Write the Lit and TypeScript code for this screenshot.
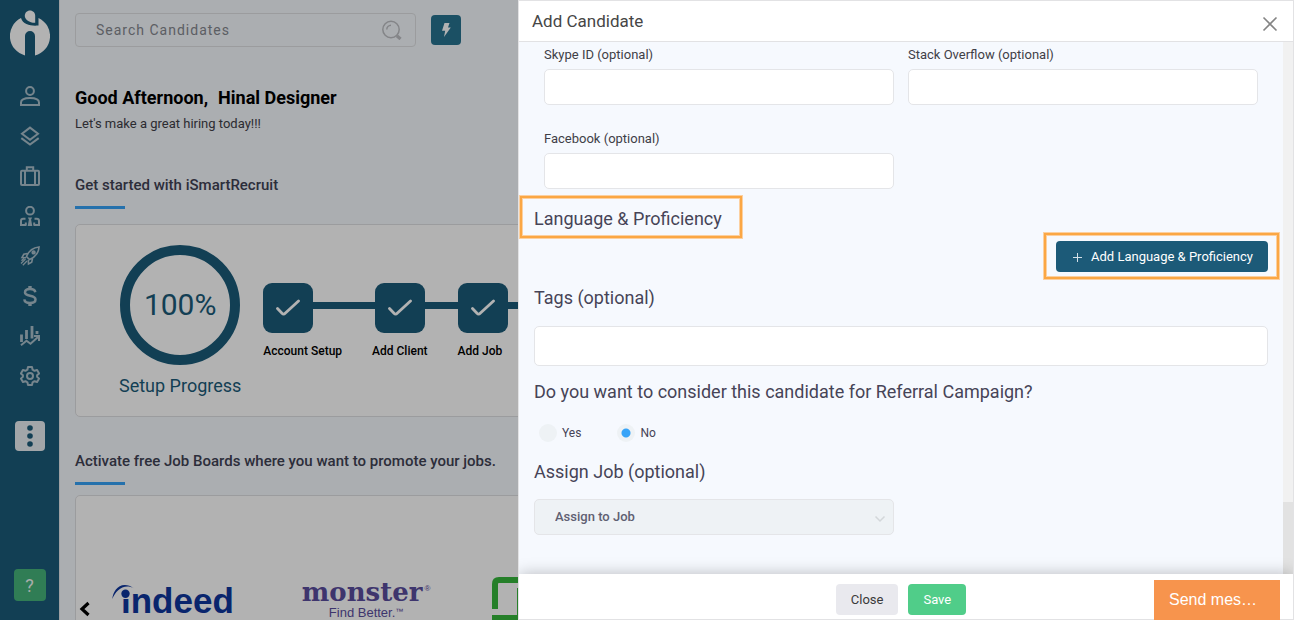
import { LitElement, html, svg, css } from "lit";
import { customElement, state } from "lit/decorators.js";

const navIcons = [
  {
    label: "Candidates",
    art: svg`<circle cx="10" cy="5" r="3.9"/><path d="M1 19v-2.600C1 13.200 5.500 11.900 10 11.900s9 1.300 9 4.500V19z"/>`,
  },
  {
    label: "Pipeline",
    art: svg`<path d="M10 1.600 18 7.700 10 13.800 2 7.700z"/><path d="M1.300 12.100 10 18.600l8.700-6.500"/>`,
  },
  {
    label: "Jobs",
    art: svg`<rect x="1" y="4.800" width="18" height="14.200" rx="1"/><path d="M6.800 4.500V1.200h6.400v3.300M5 5v14M15 5v14"/>`,
  },
  {
    label: "Clients",
    art: svg`<circle cx="10" cy="4.700" r="3.900"/><path d="M5.500 12.800H3.200Q1 12.800 1 15V19h5.500M14.500 12.800h2.300q2.200 0 2.200 2.200V19h-5.500M5.800 16.500V19M14.200 16.500V19"/><path class="solid" d="M7.800 11.500h4.400l-1.100 2 1.200 6.500H7.700l1.200-6.500z"/>`,
  },
  {
    label: "Campaigns",
    art: svg`<path d="M6.500 10.500C9 4.500 13.500 1.500 19 1c-.400 5.500-3.500 10-9.500 12.500zM7.500 7.500 3.800 8.300 2 11.500l4 .2M12.500 12.500l-.8 3.700L8.500 18l-.2-4" stroke-width="1.600"/><circle cx="13.600" cy="6.400" r="1.200"/><path d="M5.500 13 1 17.500M7 15l-4.200 4.200M4 12.300 1.500 14.800" stroke-width="1.300"/>`,
  },
  {
    label: "Billing",
    art: svg`<path d="M15.300 6.200C15 4.200 13 3.100 10 3.100c-3 0-5 1.200-5 3.400C5 11 15.500 8.400 15.500 13.400c0 2.300-2.200 3.500-5.500 3.500-3.400 0-5.400-1.200-5.700-3.600" stroke-width="2.500"/><path class="solid" d="M8.300 0h3.400v3H8.300zM8.300 17h3.400v3H8.300z"/>`,
  },
  {
    label: "Reports",
    art: svg`<path d="M1.500 8.500V16M6.500 4v9M12 0v12.500M17 5V8" stroke-width="2.800"/><path d="M1 19.200 6.500 14.800l4 3 7.500-6.700M14 10h5v5" stroke-width="2"/>`,
  },
  {
    label: "Settings",
    art: svg`<path d="M8 1h4l.6 2.700 1.900 1.100 2.600-.8 2 3.400-2 1.900v1.400l2 1.900-2 3.400-2.600-.8-1.900 1.100L12 19H8l-.6-2.700-1.900-1.100-2.600.8-2-3.400 2-1.900V9.300l-2-1.900 2-3.400 2.600.8 1.900-1.100z" stroke-linejoin="round"/><circle cx="10" cy="10" r="3"/>`,
  },
];

const steps = ["Account Setup", "Add Client", "Add Job"];

@customElement("side-nav")
class SideNav extends LitElement {
  static styles = css`
    :host {
      display: flex;
      flex-direction: column;
      align-items: center;
      box-sizing: border-box;
      width: 60px;
      padding: 10px 0 19px;
      background: #1b5b79;
      border-right: 1px solid #e3e6e9;
    }
    .logo { display: block; width: 40px; height: 46px; fill: #fff; }
    .items {
      display: flex;
      flex-direction: column;
      gap: 20px;
      list-style: none;
      margin: 30px 0 0;
      padding: 0;
    }
    .item { display: block; width: 20px; height: 20px; color: #a9bfca; }
    .icon {
      display: block;
      width: 20px;
      height: 20px;
      fill: none;
      stroke: currentColor;
      stroke-width: 2;
    }
    .solid { fill: currentColor; stroke: none; }
    .square {
      display: grid;
      place-items: center;
      padding: 0;
      border: 0;
      border-radius: 4px;
      cursor: pointer;
    }
    .more { width: 30px; height: 30px; margin-top: 35px; background: #e9eef2; }
    .dots { width: 6px; height: 22px; fill: #1b5b79; }
    .help {
      width: 32px;
      height: 32px;
      margin-top: auto;
      background: #45b47a;
      color: #f2f7f5;
      font: 18px Roboto, sans-serif;
    }
  `;

  render() {
    return html`
      <svg class="logo" viewBox="0 0 40 46" role="img" aria-label="iSmartRecruit">
        <path d="M11 8.100A20 20 0 0 0 15 45.400V26a5 5 0 0 1 10 0v19.400A20 20 0 0 0 28.500 7.900V15.500C22 16 13 15.500 11 8.100z"/>
        <path d="M20 .5c3 0 5.200 2.300 5.200 5.200v7C20 13 14.800 9.800 14.800 5.700 14.800 2.800 17 .5 20 .5z"/>
      </svg>
      <ul class="items">
        ${navIcons.map(
          (n) => html`<li>
            <a class="item" href="#" aria-label=${n.label}>
              <svg class="icon" viewBox="0 0 20 20">${n.art}</svg>
            </a>
          </li>`
        )}
      </ul>
      <button class="square more" aria-label="More">
        <svg class="dots" viewBox="0 0 6 22">
          <circle cx="3" cy="3" r="2.800"/><circle cx="3" cy="11" r="2.800"/><circle cx="3" cy="19" r="2.800"/>
        </svg>
      </button>
      <button class="square help" aria-label="Help">?</button>
    `;
  }
}

@customElement("dashboard-view")
class DashboardView extends LitElement {
  static styles = css`
    :host {
      display: block;
      box-sizing: border-box;
      min-width: 0;
      padding: 13px 15px 0;
      background: #f5f9fe;
      overflow: hidden;
    }
    .topbar { display: flex; align-items: center; gap: 15px; height: 34px; }
    .search {
      display: flex;
      align-items: center;
      box-sizing: border-box;
      width: 341px;
      height: 34px;
      padding: 0 13px 0 20px;
      border: 1px solid #dfe0e2;
      border-radius: 4px;
    }
    .search-input {
      flex: 1;
      min-width: 0;
      padding: 0;
      border: 0;
      outline: 0;
      background: none;
      font: 14px Roboto, sans-serif;
      letter-spacing: 1px;
    }
    .search-input::placeholder { color: #85888f; opacity: 1; }
    .lens { width: 20px; height: 20px; fill: none; stroke: #bdbfc3; stroke-width: 1.500; }
    .quick {
      display: grid;
      place-items: center;
      width: 30px;
      height: 30px;
      padding: 0;
      border: 0;
      border-radius: 4px;
      background: #287390;
    }
    .bolt { width: 10px; height: 14px; fill: #fff; }
    .greeting {
      display: flex;
      gap: 10px;
      margin: 39px 0 0;
      font-size: 18px;
      font-weight: 700;
      line-height: 24px;
      color: #000;
    }
    .lead { margin: 4px 0 0; font-size: 13px; line-height: 20px; color: #3f4047; }
    .title {
      margin: 0;
      padding-bottom: 14px;
      font-size: 15px;
      font-weight: 500;
      line-height: 20px;
      color: #3f4254;
      background: linear-gradient(#36a3f7, #36a3f7) 0 100% / 50px 3px no-repeat;
    }
    .title-start { margin-top: 41px; }
    .title-boards { margin-top: 34px; }
    .card {
      box-sizing: border-box;
      border: 1px solid #dfe0e2;
      border-radius: 5px;
      background: #fff;
    }
    .setup {
      display: flex;
      align-items: flex-start;
      margin-top: 15px;
      padding: 20px 0 18px 43px;
    }
    .progress { text-align: center; color: #1b5b79; }
    .ring {
      display: grid;
      place-items: center;
      box-sizing: border-box;
      width: 120px;
      height: 120px;
      margin: 0 auto;
      border: 10px solid #1b5b79;
      border-radius: 50%;
      font-size: 30px;
      line-height: 36px;
    }
    .caption { margin: 9px 0 0; font-size: 18px; line-height: 24px; }
    .steps {
      display: flex;
      flex: 1;
      gap: 30px;
      list-style: none;
      margin: 38px 0 0 22px;
      padding: 0;
      background: linear-gradient(#1b5b79, #1b5b79) 0 19px / 100% 7px no-repeat;
    }
    .step { display: flex; flex-direction: column; white-space: nowrap; }
    .step:nth-child(2) { align-items: center; }
    .badge {
      display: grid;
      place-items: center;
      width: 50px;
      height: 50px;
      border-radius: 9px;
      background: #1b5b79;
    }
    .check { width: 24px; height: 18px; fill: none; stroke: #fff; stroke-width: 2.800; }
    .step-name { margin-top: 10px; font-size: 12px; font-weight: 500; line-height: 16px; color: #000; }
    .boards {
      display: flex;
      align-items: flex-start;
      margin-top: 10px;
      height: 200px;
      padding: 80px 0 0 3px;
    }
    .prev { width: 12px; height: 16px; margin-top: 25px; padding: 0; border: 0; background: none; }
    .prev-icon { display: block; width: 12px; height: 16px; fill: none; stroke: #000; stroke-width: 3.200; }
    .indeed {
      position: relative;
      margin: 6px 0 0 30px;
      color: #0e369d;
      font: bold 35px/38px "Liberation Sans", sans-serif;
    }
    .swoosh { position: absolute; left: -9px; top: 0; width: 26px; height: 18px; fill: #0e369d; overflow: visible; }
    .gap { fill: #fff; }
    .monster { margin: 3px 0 0 68px; color: #5a4d9d; text-align: center; }
    .monster-name { font: bold 26px/27px "DejaVu Serif", serif; }
    .reg { font: 8px "Liberation Sans", sans-serif; vertical-align: 10px; margin-left: 2px; }
    .monster-tag { font: 13px/14px "Liberation Sans", sans-serif; }
    .tm { font-size: 8px; line-height: 8px; vertical-align: 3px; }
    .frame { width: 60px; height: 60px; margin-left: 62px; fill: none; stroke: #35b73c; stroke-width: 6; }
  `;

  render() {
    return html`
      <div class="topbar">
        <label class="search">
          <input class="search-input" type="search" placeholder="Search Candidates" aria-label="Search Candidates" />
          <svg class="lens" viewBox="0 0 20 20">
            <circle cx="9" cy="9.500" r="8.200"/><path d="M4.800 9.500A4.300 4.300 0 0 1 9 5.200"/>
            <path d="M14.800 15.700l3.700 3.300" stroke-width="3.200"/>
          </svg>
        </label>
        <button class="quick" aria-label="Quick actions">
          <svg class="bolt" viewBox="0 0 10 14"><path d="M3.500 0h5L7 4.400h2.800L3 14l1.200-6.200H1z"/></svg>
        </button>
      </div>
      <h1 class="greeting"><span>Good Afternoon,</span><span>Hinal Designer</span></h1>
      <p class="lead">Let's make a great hiring today!!!</p>
      <h2 class="title title-start">Get started with iSmartRecruit</h2>
      <section class="card setup">
        <div class="progress">
          <div class="ring">100%</div>
          <p class="caption">Setup Progress</p>
        </div>
        <ol class="steps">
          ${steps.map(
            (s) => html`<li class="step">
              <span class="badge">
                <svg class="check" viewBox="0 0 24 18"><path d="M1.500 9.500 6 14.300q1.600 1.600 3.200 0L22.500 2" stroke-linecap="round"/></svg>
              </span>
              <span class="step-name">${s}</span>
            </li>`
          )}
        </ol>
      </section>
      <h2 class="title title-boards">Activate free Job Boards where you want to promote your jobs.</h2>
      <section class="card boards">
        <button class="prev" aria-label="Previous">
          <svg class="prev-icon" viewBox="0 0 12 16"><path d="M9.500 2 3 8l6.500 6"/></svg>
        </button>
        <div class="indeed">
          indeed
          <svg class="swoosh" viewBox="0 0 26 18">
            <path class="gap" d="M8 4h11v13H8z"/>
            <path d="M.3 17C1 8 9-2.500 22.500 6.500 12 1 4 8 .3 17z"/>
            <circle cx="13.500" cy="11.800" r="4.200"/>
          </svg>
        </div>
        <div class="monster">
          <div class="monster-name">monster<span class="reg">®</span></div>
          <div class="monster-tag">Find Better.<span class="tm">™</span></div>
        </div>
        <svg class="frame" viewBox="0 0 60 60"><path d="M3 33V8q0-4 4-4h50M0 42h60M28 42V12"/></svg>
      </section>
    `;
  }
}

@customElement("candidate-drawer")
class CandidateDrawer extends LitElement {
  @state() referral = "No";

  static styles = css`
    :host {
      display: flex;
      flex-direction: column;
      box-sizing: border-box;
      isolation: isolate;
      background: #fff;
      border: 1px solid #e2e2e4;
      color: #3f4047;
    }
    .head {
      display: flex;
      align-items: center;
      justify-content: space-between;
      height: 40px;
      padding: 0 15px 0 13px;
      border-bottom: 1px solid #e2e2e4;
    }
    .name { margin: 0; font-size: 17px; font-weight: 400; line-height: 24px; color: #464646; }
    .close-icon { display: grid; padding: 0; border: 0; background: none; margin-top: 6px; }
    .cross { width: 16px; height: 16px; fill: none; stroke: #848484; stroke-width: 1.600; }
    .body { display: flex; flex: 1; min-height: 0; background: #f6f9fe; }
    .form { flex: 1; min-width: 0; padding: 3px 15px 0; overflow: hidden; }
    .fields {
      display: grid;
      grid-template-columns: 1fr 1fr;
      gap: 24px 14px;
      padding: 0 10px;
    }
    .field { display: flex; flex-direction: column; gap: 4px; }
    .label { font-size: 13px; line-height: 20px; }
    .input {
      box-sizing: border-box;
      width: 100%;
      height: 36px;
      padding: 0 12px;
      border: 1px solid #e4e5e8;
      border-radius: 5px;
      background: #fff;
      font: 13px Roboto, sans-serif;
    }
    .tall { display: block; height: 40px; margin-top: 16px; }
    .heading { margin: 0; font-size: 18px; font-weight: 400; line-height: 24px; color: #464457; }
    .language { margin-top: 18px; }
    .spaced { display: block; margin-top: 14px; }
    .marked { position: relative; display: inline-block; }
    .marker {
      position: absolute;
      border: 2px solid #fba744;
      box-shadow: 0 0 0 1px #fcd0a0, inset 0 0 0 1px #fcd0a0;
      pointer-events: none;
    }
    .marker-heading { inset: -11px -20px -7px -14px; }
    .marker-button { inset: -8px -11px -7px -12px; }
    .actions { display: flex; justify-content: flex-end; margin-top: 10px; }
    .btn {
      display: inline-flex;
      align-items: center;
      height: 31px;
      padding: 0 15px;
      border: 0;
      border-radius: 4px;
      font: 13px Roboto, sans-serif;
      cursor: pointer;
    }
    .add { gap: 8px; background: #1c5a78; color: #fff; }
    .plus { width: 12px; height: 12px; fill: none; stroke: #d4e0e7; stroke-width: 1; }
    .radios {
      display: flex;
      gap: 36px;
      margin: 20px 0 18px;
      padding: 0 0 0 5px;
      border: 0;
    }
    .radio { display: flex; align-items: center; gap: 5px; font-size: 12px; line-height: 18px; color: #464457; }
    .dot {
      appearance: none;
      width: 18px;
      height: 18px;
      margin: 0;
      border-radius: 50%;
      background: #eef2f5;
    }
    .dot:checked { background: radial-gradient(circle, #38a4f8 4px, #eef2f5 5px); }
    .select-wrap { position: relative; width: calc(50% - 7px); margin-top: 15px; }
    .select {
      display: block;
      appearance: none;
      box-sizing: border-box;
      width: 100%;
      height: 36px;
      padding: 0 30px 2px 20px;
      border: 1px solid #e4e5e8;
      border-radius: 5px;
      background: #eef2f5;
      color: #5f6072;
      font: 500 13px Roboto, sans-serif;
      opacity: 1;
    }
    .chevron {
      position: absolute;
      right: 8px;
      top: 16px;
      width: 12px;
      height: 8px;
      fill: none;
      stroke: #d3d7da;
      stroke-width: 1.500;
    }
    .track { display: flex; flex-direction: column; justify-content: flex-end; width: 10px; background: #f1f1f1; }
    .thumb { height: 72px; background: #e2e2e2; }
    .foot {
      display: flex;
      align-items: center;
      justify-content: center;
      gap: 10px;
      height: 45px;
      padding: 6px 10px 0 0;
      box-sizing: border-box;
      background: #fff;
      box-shadow: 0 0 16px rgba(0, 0, 0, 0.25);
      clip-path: inset(-30px 0 0 0);
      z-index: 1;
    }
    .cancel { background: #e9e9ee; color: #3a3a3a; }
    .save { background: #50cd89; color: #fff; }
  `;

  pick(value: string) {
    this.referral = value;
  }

  render() {
    return html`
      <header class="head">
        <h2 class="name">Add Candidate</h2>
        <button class="close-icon" aria-label="Close panel">
          <svg class="cross" viewBox="0 0 16 16"><path d="M1.500 1.500l13 13M14.500 1.500l-13 13"/></svg>
        </button>
      </header>
      <div class="body">
        <form class="form">
          <div class="fields">
            <div class="field">
              <label class="label" for="skype">Skype ID (optional)</label>
              <input class="input" id="skype" type="text" />
            </div>
            <div class="field">
              <label class="label" for="stack">Stack Overflow (optional)</label>
              <input class="input" id="stack" type="text" />
            </div>
            <div class="field">
              <label class="label" for="facebook">Facebook (optional)</label>
              <input class="input" id="facebook" type="text" />
            </div>
          </div>
          <h3 class="heading language">
            <span class="marked">Language &amp; Proficiency<span class="marker marker-heading"></span></span>
          </h3>
          <div class="actions">
            <span class="marked">
              <button class="btn add" type="button">
                <svg class="plus" viewBox="0 0 12 12"><path d="M6.500 2v9M2 6.500h9"/></svg>
                <span>Add Language &amp; Proficiency</span>
              </button>
              <span class="marker marker-button"></span>
            </span>
          </div>
          <label class="heading spaced" for="tags">Tags (optional)</label>
          <input class="input tall" id="tags" type="text" />
          <h3 class="heading spaced" id="referral">Do you want to consider this candidate for Referral Campaign?</h3>
          <div class="radios" role="radiogroup" aria-labelledby="referral">
            ${["Yes", "No"].map(
              (v) => html`<label class="radio">
                <input class="dot" type="radio" name="referral" .checked=${this.referral === v} @change=${() => this.pick(v)} />
                ${v}
              </label>`
            )}
          </div>
          <label class="heading" for="job">Assign Job (optional)</label>
          <div class="select-wrap">
            <select class="select" id="job" disabled>
              <option>Assign to Job</option>
            </select>
            <svg class="chevron" viewBox="0 0 12 8"><path d="M1.500 1.500 6 6l4.500-4.500"/></svg>
          </div>
        </form>
        <div class="track"><div class="thumb"></div></div>
      </div>
      <footer class="foot">
        <button class="btn cancel">Close</button>
        <button class="btn save">Save</button>
      </footer>
    `;
  }
}

@customElement("app-root")
class AppRoot extends LitElement {
  static styles = css`
    :host {
      display: block;
      position: relative;
      height: 100vh;
      overflow: hidden;
      font-family: Roboto, sans-serif;
    }
    .page { display: grid; grid-template-columns: auto minmax(0, 1fr); height: 100%; }
    .shade { position: absolute; inset: 0; background: rgba(0, 0, 0, 0.3); }
    .drawer { position: absolute; top: 0; right: 0; bottom: 0; width: round(down, 60%, 1px); }
    .chat {
      position: absolute;
      right: 14px;
      bottom: 0;
      width: 126px;
      height: 40px;
      padding: 0 15px;
      border: 0;
      background: #f7944d;
      color: #fff;
      font: 16px "Liberation Sans", sans-serif;
      text-align: left;
    }
  `;

  render() {
    return html`
      <div class="page">
        <side-nav></side-nav>
        <dashboard-view></dashboard-view>
      </div>
      <div class="shade"></div>
      <candidate-drawer class="drawer"></candidate-drawer>
      <button class="chat">Send mes…</button>
    `;
  }
}
